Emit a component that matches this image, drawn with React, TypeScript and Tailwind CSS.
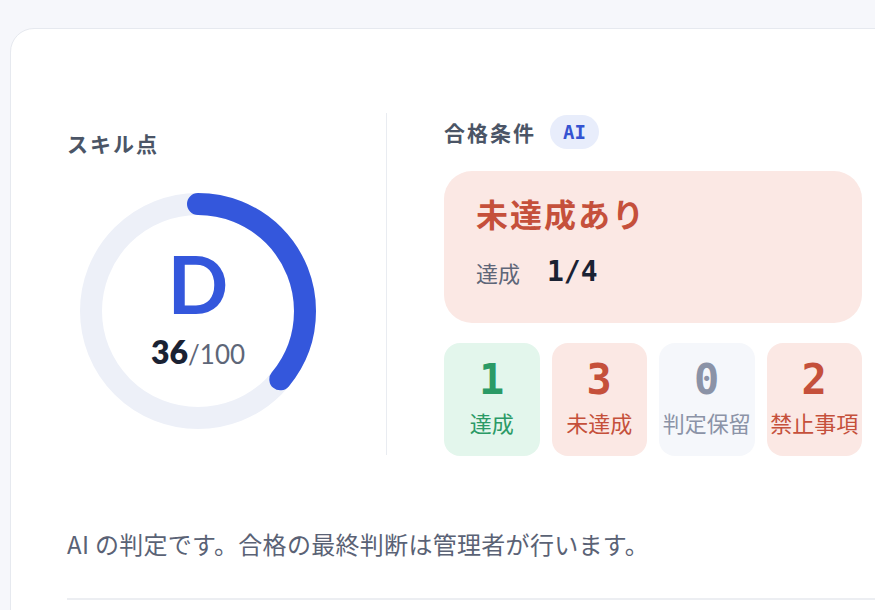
import React from "react";

const stats = [
  { value: "1", label: "達成", box: "bg-[#e3f6ec]", text: "text-[#2b9a66]" },
  { value: "3", label: "未達成", box: "bg-[#fbe8e4]", text: "text-[#c5503b]" },
  { value: "0", label: "判定保留", box: "bg-[#f5f7fb]", text: "text-[#8b93a7]" },
  { value: "2", label: "禁止事項", box: "bg-[#fbe8e4]", text: "text-[#c5503b]" },
];

function ScoreRing({ score }: { score: number }) {
  const r = 107;
  const c = 2 * Math.PI * r;
  const dash = (score / 100) * c;
  return (
    <div className="relative w-[236px] h-[236px]">
      <svg width="236" height="236" viewBox="0 0 236 236">
        <circle cx="118" cy="118" r={r} fill="none" stroke="#edf0f8" strokeWidth="22" />
        <circle
          cx="118"
          cy="118"
          r={r}
          fill="none"
          stroke="#3457dc"
          strokeWidth="22"
          strokeLinecap="round"
          strokeDasharray={`${dash} ${c}`}
          transform="rotate(-90 118 118)"
        />
      </svg>
      <div className="absolute inset-0 flex flex-col items-center pt-[50px] font-['Lato',sans-serif]">
        <div className="text-[80px] leading-none font-bold text-[#3457dc]">D</div>
        <div className="mt-[13px] flex items-baseline leading-none">
          <span className="text-[32px] font-extrabold text-[#1a2233]">{score}</span>
          <span className="text-[26px] text-[#5e6678]">/100</span>
        </div>
      </div>
    </div>
  );
}

export default function App() {
  return (
    <div className="w-[875px] h-[610px] overflow-hidden bg-[#f6f7fb] pt-[28px] pl-[10px] font-['Noto_Sans_CJK_JP',sans-serif]">
      <div className="w-[920px] h-[640px] rounded-tl-[24px] border border-[#e6e9ef] bg-white pl-[56px] pt-[84px]">
        <div className="flex">
          <div className="w-[319px] pt-[17px]">
            <h3 className="text-[21px] leading-[26px] font-bold tracking-[2px] text-[#4b5566]">スキル点</h3>
            <div className="mt-[37px] ml-[13px]">
              <ScoreRing score={36} />
            </div>
          </div>

          <div className="w-px h-[342px] bg-[#e9ecf1]" />

          <div className="ml-[57px] w-[418px]">
            <div className="flex items-center h-[36px] mt-px">
              <h3 className="text-[21px] leading-[26px] font-bold tracking-[2px] text-[#4b5566]">合格条件</h3>
              <span className="ml-[14px] h-[34px] w-[49px] rounded-full bg-[#e8edfb] flex items-center justify-center font-['DejaVu_Sans_Mono',monospace] text-[19px] font-bold text-[#3553d1]">
                AI
              </span>
            </div>

            <div className="mt-[21px] h-[152px] rounded-[28px] bg-[#fbe8e4] pl-[32px] pt-[22px]">
              <div className="text-[32px] leading-[40px] font-bold tracking-[2px] text-[#c5503b]">未達成あり</div>
              <div className="mt-[23px] flex items-center h-[32px]">
                <span className="text-[22px] text-[#5e6678]">達成</span>
                <span className="ml-[27px] font-['DejaVu_Sans_Mono',monospace] text-[28px] font-bold text-[#1a2233]">1/4</span>
              </div>
            </div>

            <div className="mt-[20px] grid grid-cols-4 gap-3">
              {stats.map((s) => (
                <div key={s.label} className={`h-[113px] rounded-[16px] ${s.box} flex flex-col items-center pt-[14px]`}>
                  <div className={`font-['DejaVu_Sans_Mono',monospace] text-[42px] leading-[46px] font-bold ${s.text}`}>{s.value}</div>
                  <div className={`mt-[5px] text-[22px] leading-[28px] whitespace-nowrap ${s.text}`}>{s.label}</div>
                </div>
              ))}
            </div>
          </div>
        </div>

        <p className="mt-[72px] text-[24px] leading-[32px] tracking-[0.3px] text-[#5a6275]">
          AI の判定です。合格の最終判断は管理者が行います。
        </p>
        <div className="mt-[38px] h-[2px] bg-[#eceef2]" />
      </div>
    </div>
  );
}
